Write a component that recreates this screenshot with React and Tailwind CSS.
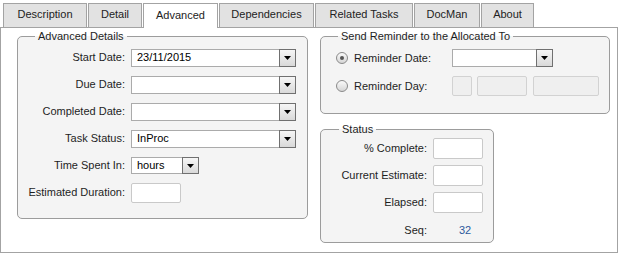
import React from "react";

const tabs = [
  { label: "Description", w: "w-[84px]" },
  { label: "Detail", w: "w-[54px]" },
  { label: "Advanced", w: "w-[75px]", active: true },
  { label: "Dependencies", w: "w-[95px]" },
  { label: "Related Tasks", w: "w-[98px]" },
  { label: "DocMan", w: "w-[66px]" },
  { label: "About", w: "w-[53px]" },
];

function DropBtn() {
  return (
    <div className="w-[17px] h-full border border-[#707070] bg-gradient-to-b from-[#f6f6f6] to-[#d9d9d9] flex items-center justify-center shrink-0">
      <svg width="7" height="4" viewBox="0 0 7 4">
        <path d="M0 0H7L3.5 4Z" fill="#000" />
      </svg>
    </div>
  );
}

function Select({ value, w, h = "h-[18px]" }) {
  return (
    <div className={`flex ${w} ${h}`}>
      <div className="flex-1 bg-white border border-r-0 border-[#ababab] pl-[5px] flex items-center text-[11px] text-black">
        {value}
      </div>
      <DropBtn />
    </div>
  );
}

function Box({ w, h = "h-[21px]", disabled }) {
  return (
    <div
      className={`${w} ${h} rounded-[2px] border ${
        disabled ? "bg-[#efefef] border-[#d2d2d2]" : "bg-white border-[#c9c9c9]"
      }`}
    />
  );
}

function Row({ label, children, h = "h-[27px]" }) {
  return (
    <div className={`flex items-center ${h}`}>
      <div className="w-[107px] text-right text-[11px] text-[#1e1e1e]">{label}</div>
      <div className="ml-[6px] flex items-center">{children}</div>
    </div>
  );
}

function StatusRow({ label, children, h = "h-[27px]", extra = "" }) {
  return (
    <div className={`flex items-center ${h} ${extra}`}>
      <div className="w-[106px] text-right text-[11px] text-[#1e1e1e]">{label}</div>
      <div className="ml-[6px] flex items-center">{children}</div>
    </div>
  );
}

function Radio({ checked }) {
  return (
    <div className="w-[12px] h-[12px] rounded-full border border-[#8a8a8a] bg-gradient-to-b from-[#fafafa] to-[#d6d6d6] flex items-center justify-center shrink-0">
      {checked && <div className="w-[4px] h-[4px] rounded-full bg-[#555]" />}
    </div>
  );
}

function Legend({ children, ml = "ml-[17px]" }) {
  return (
    <legend className={`${ml} px-[3px] text-[11px] leading-[12px] text-[#1e1e1e]`}>{children}</legend>
  );
}

export default function App() {
  return (
    <div
      className="w-[618px] h-[253px] bg-white"
      style={{ fontFamily: '"Liberation Sans", Arial, sans-serif' }}
    >
      <div className="relative z-10 flex items-end gap-px pl-[3px] pt-[3px]">
        {tabs.map((t) => (
          <div
            key={t.label}
            className={`${t.w} h-[25px] flex items-center justify-center pb-[2px] text-[11px] text-[#222] border border-[#a3a3a3] ${
              t.active ? "bg-white border-b-0" : "bg-[#e2e2e2]"
            }`}
          >
            {t.label}
          </div>
        ))}
      </div>
      <div className="-mt-px h-[226px] border border-[#a3a3a3] bg-white flex pl-[16px] gap-[12px]">
        <fieldset className="mt-[2px] w-[291px] h-[189px] border border-[#9c9c9c] rounded-[5px] bg-[#f4f4f4] pt-[2px] pb-[12px]">
          <Legend>Advanced Details</Legend>
          <Row label="Start Date:">
            <Select value="23/11/2015" w="w-[165px]" />
          </Row>
          <Row label="Due Date:">
            <Select value="" w="w-[165px]" />
          </Row>
          <Row label="Completed Date:">
            <Select value="" w="w-[165px]" />
          </Row>
          <Row label="Task Status:">
            <Select value="InProc" w="w-[165px]" />
          </Row>
          <Row label="Time Spent In:">
            <Select value="hours" w="w-[68px]" h="h-[17px]" />
          </Row>
          <Row label="Estimated Duration:">
            <Box w="w-[50px]" h="h-[20px]" />
          </Row>
        </fieldset>

        <div className="flex flex-col">
          <fieldset className="mt-[2px] w-[290px] h-[84px] border border-[#9c9c9c] rounded-[5px] bg-[#f4f4f4] pt-[2px] pl-[15px]">
            <Legend ml="ml-[2px]">Send Reminder to the Allocated To</Legend>
            <div className="flex items-center h-[28px]">
              <Radio checked />
              <div className="ml-[6px] w-[98px] text-[11px] text-[#1e1e1e]">Reminder Date:</div>
              <Select value="" w="w-[101px]" />
            </div>
            <div className="flex items-center h-[28px]">
              <Radio />
              <div className="ml-[6px] w-[98px] text-[11px] text-[#1e1e1e]">Reminder Day:</div>
              <div className="flex items-center">
                <Box w="w-[20px]" h="h-[20px]" disabled />
                <div className="ml-[5px]">
                  <Box w="w-[50px]" h="h-[20px]" disabled />
                </div>
                <div className="ml-[6px]">
                  <Box w="w-[66px]" h="h-[20px]" disabled />
                </div>
              </div>
            </div>
          </fieldset>

          <fieldset className="mt-[9px] w-[174px] h-[120px] border border-[#9c9c9c] rounded-[5px] bg-[#f4f4f4]">
            <Legend ml="ml-[18px]">Status</Legend>
            <StatusRow label="% Complete:">
              <Box w="w-[50px]" />
            </StatusRow>
            <StatusRow label="Current Estimate:">
              <Box w="w-[50px]" />
            </StatusRow>
            <StatusRow label="Elapsed:">
              <Box w="w-[50px]" />
            </StatusRow>
            <StatusRow label="Seq:" h="h-[26px]" extra="pt-[3px]">
              <span className="ml-[26px] text-[11px] text-[#2d5a9c]">32</span>
            </StatusRow>
          </fieldset>
        </div>
      </div>
    </div>
  );
}
